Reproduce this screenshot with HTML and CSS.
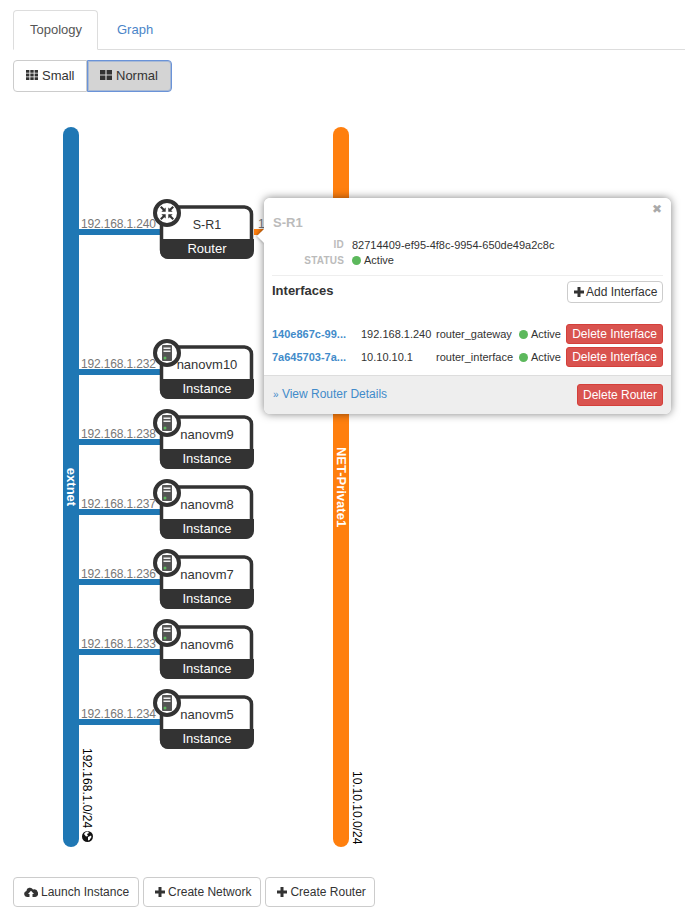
FILE: index.html
```html
<!DOCTYPE html>
<html lang="en">
<head>
    <meta charset="UTF-8">
    <title>Network Topology</title>
    <link rel="stylesheet" href="styles.css">
</head>
<body>
    <ul class="tabs">
        <li class="tab active">Topology</li>
        <li class="tab"><a href="#">Graph</a></li>
    </ul>

    <div class="btn-group">
        <button class="btn">
            <svg class="icon" viewBox="0 0 12 12"><path d="M0 1h3.4v2.8H0zM4.3 1h3.4v2.8H4.3zM8.6 1H12v2.8H8.6zM0 4.6h3.4v2.8H0zM4.3 4.6h3.4v2.8H4.3zM8.6 4.6H12v2.8H8.6zM0 8.2h3.4V11H0zM4.3 8.2h3.4V11H4.3zM8.6 8.2H12V11H8.6z"/></svg>
            Small
        </button>
        <button class="btn selected">
            <svg class="icon" viewBox="0 0 12 12"><path d="M0 1h5.4v4.4H0zM6.6 1H12v4.4H6.6zM0 6.6h5.4V11H0zM6.6 6.6H12V11H6.6z"/></svg>
            Normal
        </button>
    </div>

    <div class="canvas">
        <svg class="topology" width="685" height="770" viewBox="0 100 685 770">
            <defs>
                <g id="node-shape">
                    <rect class="link-blue" x="79" y="229" width="82" height="6"/>
                    <rect class="node-box" x="161.500" y="207" width="90" height="50" rx="7"/>
                    <path class="node-band" d="M160 239h94v12a8 8 0 0 1-8 8h-78a8 8 0 0 1-8-8z"/>
                    <circle class="node-badge" cx="167" cy="213" r="12"/>
                </g>
                <g id="server-icon">
                    <rect class="server" x="162" y="205" width="10" height="16" rx="1"/>
                    <rect class="server-slot" x="163.500" y="207.500" width="7" height="1.500"/>
                    <rect class="server-slot" x="163.500" y="210.500" width="7" height="1.500"/>
                    <circle class="server-led" cx="165" cy="218" r="1.500"/>
                </g>
            </defs>

            <!-- networks -->
            <rect class="net-blue" x="63" y="127" width="16" height="720" rx="8"/>
            <rect class="net-orange" x="333" y="127" width="16" height="720" rx="8"/>
            <text class="net-name" transform="translate(67 487) rotate(90)" text-anchor="middle">extnet</text>
            <text class="net-name" transform="translate(337 487) rotate(90)" text-anchor="middle">NET-Private1</text>
            <text class="net-cidr" transform="translate(83 748) rotate(90)">192.168.1.0/24</text>
            <text class="net-cidr" transform="translate(353 771) rotate(90)">10.10.10.0/24</text>
            <circle cx="87.500" cy="836.500" r="5.500" class="globe"/>
            <path class="globe-land" d="M84 834c1-2 3-2.500 4-2.500l1 1.500-2 1 1 2-2 .5zM88 837l3-1.500 .5 1.500-2 3-1.500 .5z"/>

            <!-- router -->
            <rect class="link-orange" x="254" y="229" width="20" height="6"/>
            <text class="ip" x="258" y="228">10.10.10.1</text>
            <use href="#node-shape"/>
            <text class="ip" x="81" y="228">192.168.1.240</text>
            <text class="node-name router-name" x="207" y="229">S-R1</text>
            <text class="node-type" x="207" y="253">Router</text>
            <path class="router-icon" d="M160 207.500l1.500-1.500 2.800 2.800 1.400-1.400v4.300h-4.300l1.400-1.400zM174 207.500l-1.500-1.500-2.800 2.800-1.400-1.400v4.300h4.300l-1.400-1.400zM160 218.500l1.500 1.500 2.800-2.800 1.400 1.400v-4.300h-4.300l1.400 1.400zM174 218.500l-1.500 1.500-2.800-2.800-1.400 1.400v-4.300h4.300l-1.400 1.400z"/>

            <!-- instances, one row every 70px -->
            <g transform="translate(0 140)">
                <use href="#node-shape"/>
                <use href="#server-icon"/>
                <text class="ip" x="81" y="228">192.168.1.232</text>
                <text class="node-name" x="207" y="229">nanovm10</text>
                <text class="node-type" x="207" y="253">Instance</text>
            </g>
            <g transform="translate(0 210)">
                <use href="#node-shape"/>
                <use href="#server-icon"/>
                <text class="ip" x="81" y="228">192.168.1.238</text>
                <text class="node-name" x="207" y="229">nanovm9</text>
                <text class="node-type" x="207" y="253">Instance</text>
            </g>
            <g transform="translate(0 280)">
                <use href="#node-shape"/>
                <use href="#server-icon"/>
                <text class="ip" x="81" y="228">192.168.1.237</text>
                <text class="node-name" x="207" y="229">nanovm8</text>
                <text class="node-type" x="207" y="253">Instance</text>
            </g>
            <g transform="translate(0 350)">
                <use href="#node-shape"/>
                <use href="#server-icon"/>
                <text class="ip" x="81" y="228">192.168.1.236</text>
                <text class="node-name" x="207" y="229">nanovm7</text>
                <text class="node-type" x="207" y="253">Instance</text>
            </g>
            <g transform="translate(0 420)">
                <use href="#node-shape"/>
                <use href="#server-icon"/>
                <text class="ip" x="81" y="228">192.168.1.233</text>
                <text class="node-name" x="207" y="229">nanovm6</text>
                <text class="node-type" x="207" y="253">Instance</text>
            </g>
            <g transform="translate(0 490)">
                <use href="#node-shape"/>
                <use href="#server-icon"/>
                <text class="ip" x="81" y="228">192.168.1.234</text>
                <text class="node-name" x="207" y="229">nanovm5</text>
                <text class="node-type" x="207" y="253">Instance</text>
            </g>
        </svg>

        <!-- router balloon -->
        <div class="balloon">
            <div class="balloon-arrow"></div>
            <div class="balloon-main">
                <span class="balloon-close">&#10006;</span>
                <div class="balloon-title">S-R1</div>
                <dl class="info">
                    <dt>ID</dt>
                    <dd>82714409-ef95-4f8c-9954-650de49a2c8c</dd>
                    <dt>STATUS</dt>
                    <dd><i class="dot"></i>Active</dd>
                </dl>
                <div class="iface-head">
                    <span class="iface-title">Interfaces</span>
                    <button class="btn btn-small">
                        <svg class="icon" viewBox="0 0 12 12"><path d="M4.500 1h3v3.500H11v3H7.500V11h-3V7.500H1v-3h3.500z"/></svg>
                        Add Interface
                    </button>
                </div>
                <div class="iface-row">
                    <a class="iface-id" href="#">140e867c-99...</a>
                    <span class="iface-ip">192.168.1.240</span>
                    <span class="iface-kind">router_gateway</span>
                    <span class="iface-status"><i class="dot"></i>Active</span>
                    <button class="btn-danger">Delete Interface</button>
                </div>
                <div class="iface-row">
                    <a class="iface-id" href="#">7a645703-7a...</a>
                    <span class="iface-ip">10.10.10.1</span>
                    <span class="iface-kind">router_interface</span>
                    <span class="iface-status"><i class="dot"></i>Active</span>
                    <button class="btn-danger">Delete Interface</button>
                </div>
            </div>
            <div class="balloon-foot">
                <a class="foot-link" href="#"><small>&raquo;</small> View Router Details</a>
                <button class="btn-danger btn-router">Delete Router</button>
            </div>
        </div>
    </div>

    <div class="actions">
        <button class="btn btn-action">
            <svg class="icon icon-cloud" viewBox="0 0 14 12"><path d="M3 11a3 3 0 0 1-.6-5.900A3.500 3.500 0 0 1 9 3.600 3.700 3.700 0 0 1 11.300 11H8.500V8H10L7 4.800 4 8h1.500v3z"/></svg>
            Launch Instance
        </button>
        <button class="btn btn-action">
            <svg class="icon" viewBox="0 0 12 12"><path d="M4.500 1h3v3.500H11v3H7.500V11h-3V7.500H1v-3h3.500z"/></svg>
            Create Network
        </button>
        <button class="btn btn-action">
            <svg class="icon" viewBox="0 0 12 12"><path d="M4.500 1h3v3.500H11v3H7.500V11h-3V7.500H1v-3h3.500z"/></svg>
            Create Router
        </button>
    </div>
</body>
</html>
```

FILE: styles.css
```css
body {
    font-family: "Liberation Sans", Arial, sans-serif;
    font-size: 12px;
    color: #333333;
    margin: 0;
    padding: 10px 0 0 13px;
    background-color: #FFFFFF;
    overflow: hidden;
}

a {
    color: #428bca;
    text-decoration: none;
}

/* tabs */
.tabs {
    display: flex;
    list-style: none;
    margin: 0;
    padding: 0;
    height: 39px;
    border-bottom: 1px solid #ddd;
}

.tab {
    box-sizing: border-box;
    height: 40px;
    padding: 11px 18px 0;
    font-size: 13px;
    line-height: 15px;
    color: #555;
    border: 1px solid transparent;
    border-radius: 4px 4px 0 0;
}

.tab.active {
    background-color: #fff;
    border-color: #ddd #ddd #fff;
    width: 85px;
    padding-left: 16px;
}

.tab a {
    color: #4a85c8;
}

/* buttons */
.btn {
    display: inline-flex;
    align-items: center;
    gap: 4px;
    box-sizing: border-box;
    height: 32px;
    padding: 0 12px;
    font: 13px "Liberation Sans", Arial, sans-serif;
    color: #333;
    background-color: #fff;
    border: 1px solid #ccc;
    border-radius: 4px;
}

.icon {
    width: 12px;
    height: 12px;
    fill: #333;
    flex: none;
}

.icon-cloud {
    width: 14px;
    margin-right: 1px;
}

.btn-group {
    display: flex;
    margin-top: 10px;
}

.btn-group .btn {
    border-radius: 4px 0 0 4px;
    width: 74px;
    padding-bottom: 2px;
}

.btn-group .btn.selected {
    width: 85px;
    border-radius: 0 4px 4px 0;
    border-color: #6a93d8;
    background-color: #d4d4d4;
    box-shadow: inset 0 0 0 1px rgba(106, 147, 216, 0.4);
}

/* topology canvas */
.canvas {
    position: relative;
    height: 785px;
}

.topology {
    position: absolute;
    left: -13px;
    top: 8px;
    overflow: visible;
}

.topology text {
    font-family: "Liberation Sans", Arial, sans-serif;
}

.net-blue, .link-blue {
    fill: #1f77b4;
}

.net-orange, .link-orange {
    fill: #ff7f0e;
}

.net-name {
    font-size: 13px;
    font-weight: bold;
    fill: #fff;
}

.net-cidr {
    font-size: 12px;
    fill: #000;
}

.globe {
    fill: #111;
}

.globe-land {
    fill: #fff;
}

.ip {
    font-size: 12px;
    fill: #777;
    letter-spacing: -0.15px;
}

.node-box {
    fill: #fff;
    stroke: #333;
    stroke-width: 3.5;
}

.node-band {
    fill: #333;
}

.node-name {
    font-size: 13px;
    fill: #333;
    text-anchor: middle;
}

.router-name {
    font-size: 12.5px;
}

.node-type {
    font-size: 13px;
    fill: #fff;
    text-anchor: middle;
}

.node-badge {
    fill: #fff;
    stroke: #333;
    stroke-width: 4;
}

.router-icon {
    fill: #333;
}

.server {
    fill: #555;
}

.server-slot {
    fill: #eee;
}

.server-led {
    fill: #5cb85c;
}

/* balloon */
.balloon {
    position: absolute;
    left: 251px;
    top: 106px;
    width: 407px;
    height: 216px;
    box-sizing: border-box;
    background-color: #fff;
    border-radius: 6px;
    box-shadow: 0 0 8px rgba(0, 0, 0, 0.5);
}

.balloon-arrow {
    position: absolute;
    left: -5px;
    top: 33px;
    width: 10px;
    height: 10px;
    background-color: #fff;
    transform: rotate(45deg);
    box-shadow: -1px 1px 3px rgba(0, 0, 0, 0.25);
}

.balloon-close {
    position: absolute;
    right: 9px;
    top: 5px;
    font-size: 12px;
    line-height: 12px;
    color: #aaa;
}

.balloon-main {
    position: relative;
    padding: 17px 8px 0 8px;
    height: 177px;
    box-sizing: border-box;
    background-color: #fff;
    border-radius: 6px 6px 0 0;
}

.balloon-title {
    font-size: 13px;
    line-height: 16px;
    font-weight: bold;
    color: #bbb;
    padding-left: 1px;
}

.info {
    display: grid;
    grid-template-columns: 72px 1fr;
    column-gap: 8px;
    row-gap: 1px;
    margin: 7px 0 0;
    padding-bottom: 7px;
    border-bottom: 1px solid #eee;
    font-size: 11px;
    line-height: 14px;
}

.info dt {
    font-size: 10px;
    font-weight: bold;
    color: #bbb;
    text-align: right;
    letter-spacing: 0.2px;
}

.info dt:nth-of-type(2) {
    margin-top: 1px;
}

.info dd {
    margin: 0;
    color: #333;
}

.dot {
    display: inline-block;
    width: 9px;
    height: 9px;
    margin-right: 3px;
    border-radius: 50%;
    background-color: #5cb85c;
    vertical-align: -1px;
}

.iface-head {
    display: flex;
    justify-content: space-between;
    align-items: flex-start;
    margin: 5px 0 21px;
}

.iface-title {
    font-size: 13px;
    font-weight: bold;
    line-height: 20px;
    color: #333;
}

.btn-small {
    width: 96px;
    height: 22px;
    padding: 0 0 0 5px;
    gap: 1px;
    font-size: 12px;
    white-space: nowrap;
}

.iface-row {
    display: flex;
    align-items: center;
    justify-content: space-between;
    height: 20px;
    margin-bottom: 3px;
    font-size: 11px;
}

.iface-row > * {
    white-space: nowrap;
}

.iface-row a, .iface-row span {
    padding-bottom: 1px;
}

.iface-id {
    width: 89px;
    font-weight: bold;
    color: #428bca;
}

.iface-ip {
    width: 75px;
}

.iface-kind {
    width: 83px;
}

.iface-status {
    width: 47px;
}

.btn-danger {
    font: 12px "Liberation Sans", Arial, sans-serif;
    color: #fff;
    background-color: #d9534f;
    border: 1px solid #d43f3a;
    border-radius: 3px;
    height: 20px;
    width: 97px;
    padding: 0;
}

.balloon-foot {
    display: flex;
    justify-content: space-between;
    align-items: center;
    box-sizing: border-box;
    height: 39px;
    padding: 0 8px 0 9px;
    background-color: #eee;
    border-top: 1px solid #ddd;
    border-radius: 0 0 6px 6px;
    font-size: 12px;
}

.foot-link {
    padding-bottom: 2px;
}

.btn-router {
    width: 86px;
    height: 22px;
}

/* bottom actions */
.actions {
    display: flex;
    gap: 4px;
    margin-top: 0;
}

.btn-action {
    height: 30px;
    padding: 0 9px 0 10px;
    gap: 2px;
    font-size: 12px;
}

.btn-action:last-child {
    padding-right: 8px;
}
```
